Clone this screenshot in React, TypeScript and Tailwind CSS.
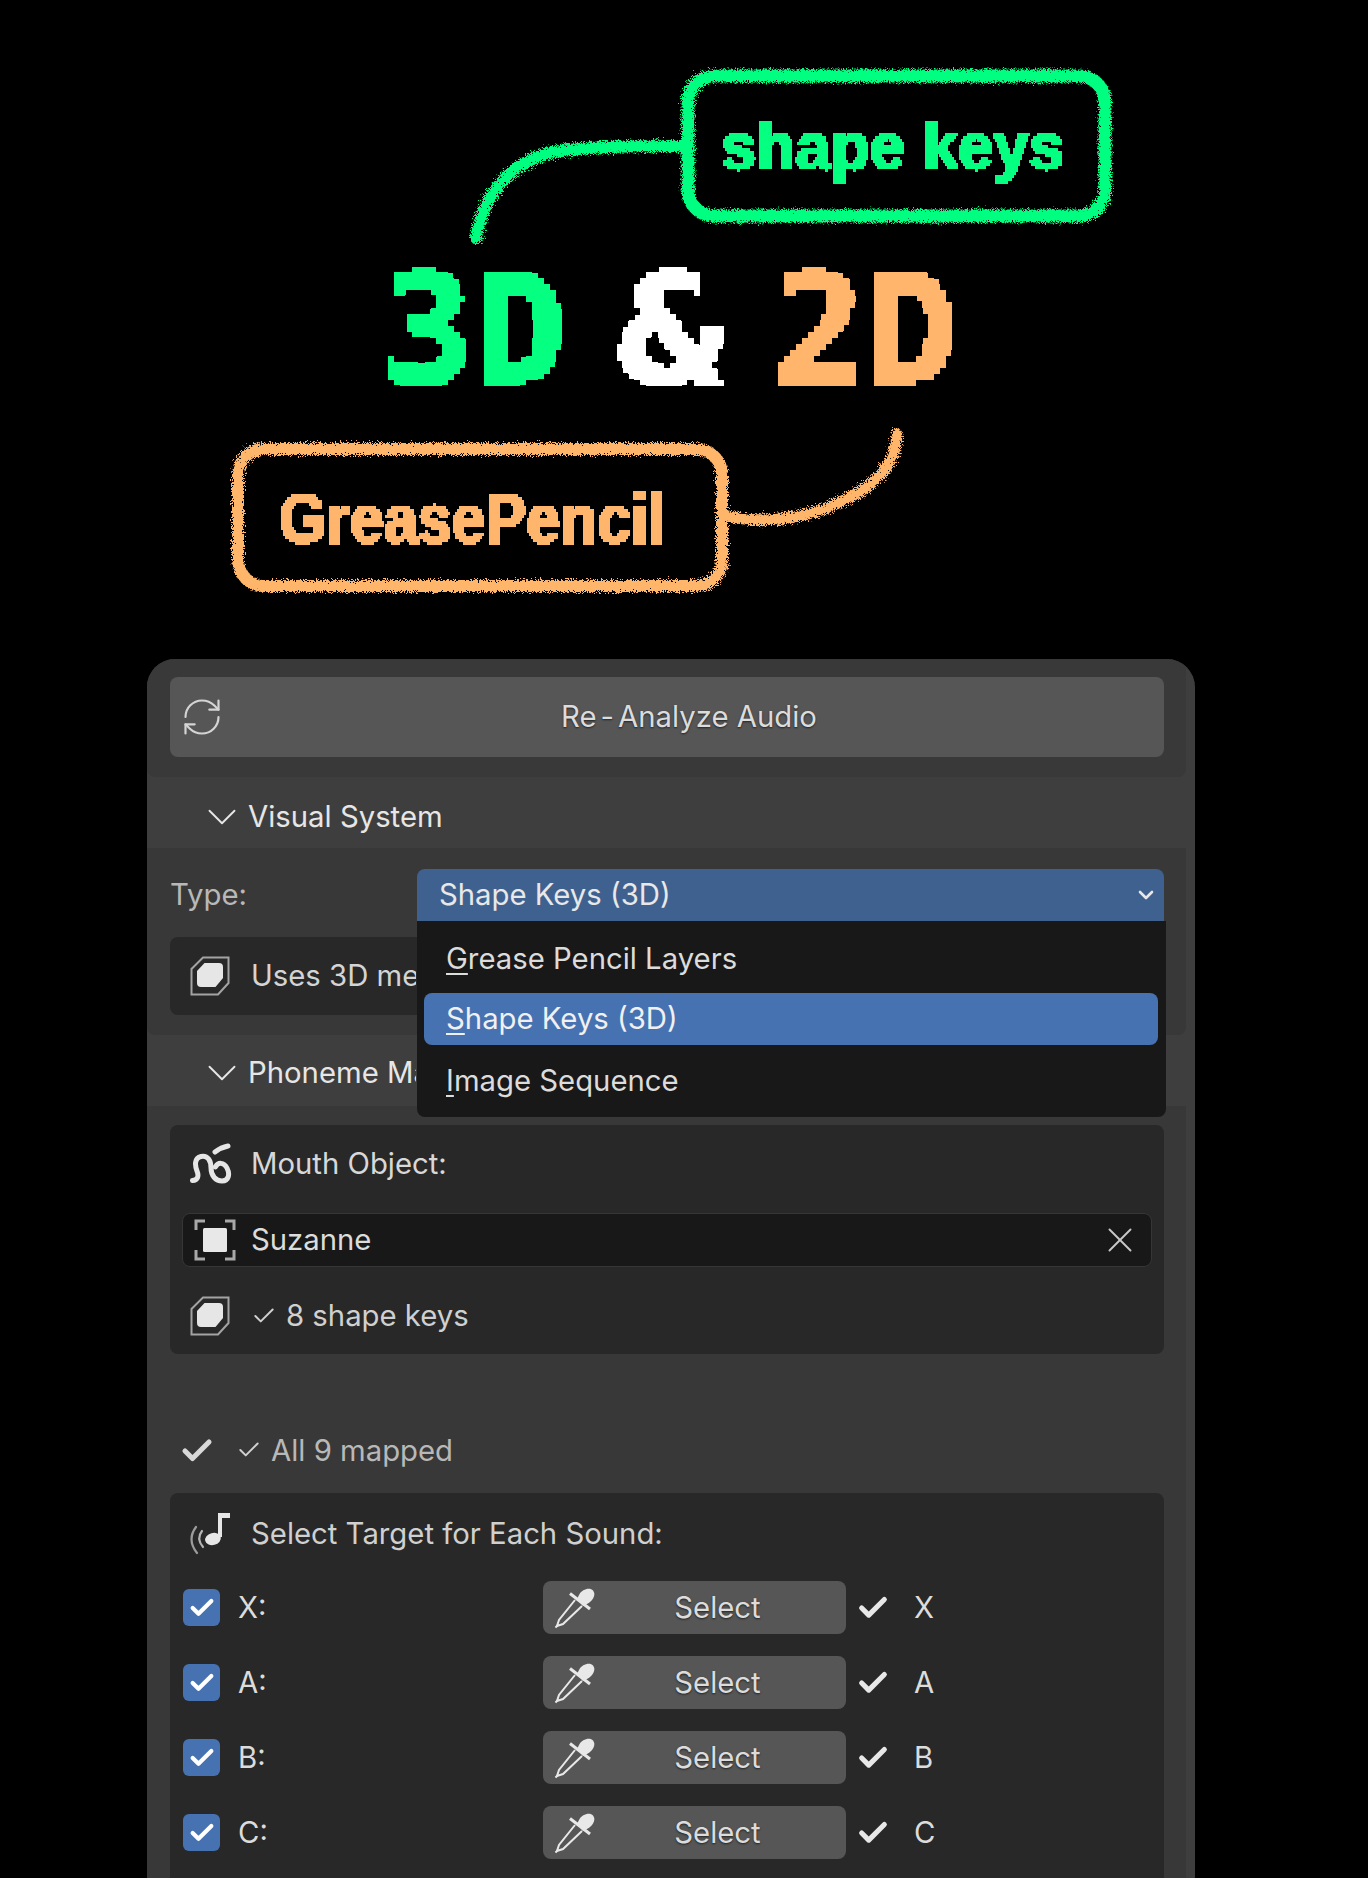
import { Check, ChevronDown, RefreshCw, X } from 'lucide-react';

const UI_FONT = { fontFamily: 'Inter, "Noto Sans", sans-serif' };

const rows = [
  { key: 'X', label: 'X:' },
  { key: 'A', label: 'A:' },
  { key: 'B', label: 'B:' },
  { key: 'C', label: 'C:' },
];

// block-sampling filter: keeps the title as live text but gives it the bitmap look
function Filters() {
  return (
    <svg className="absolute h-0 w-0">
      <defs>
        <filter id="pixel6" x="0" y="0" width="100%" height="100%" colorInterpolationFilters="sRGB">
          <feFlood x="2" y="2" width="2" height="2" floodColor="#000" />
          <feComposite width="6" height="6" />
          <feTile result="grid" />
          <feComponentTransfer in="SourceGraphic" result="hard">
            <feFuncA type="discrete" tableValues="0 1" />
          </feComponentTransfer>
          <feComposite in="hard" in2="grid" operator="in" />
          <feMorphology operator="dilate" radius="2" />
        </filter>
        <filter id="pixel3" x="0" y="0" width="100%" height="100%" colorInterpolationFilters="sRGB">
          <feFlood x="1" y="1" width="1" height="1" floodColor="#000" />
          <feComposite width="3" height="3" />
          <feTile result="grid" />
          <feComponentTransfer in="SourceGraphic" result="hard">
            <feFuncA type="discrete" tableValues="0 1" />
          </feComponentTransfer>
          <feComposite in="hard" in2="grid" operator="in" />
          <feMorphology operator="dilate" radius="1" />
        </filter>
        <filter id="chalk" x="-5%" y="-5%" width="110%" height="110%">
          <feTurbulence type="fractalNoise" baseFrequency="1.4" numOctaves="3" seed="4" />
          <feDisplacementMap in="SourceGraphic" scale="10" />
        </filter>
      </defs>
    </svg>
  );
}

function Callouts() {
  return (
    <svg className="absolute inset-0" width="1368" height="659" viewBox="0 0 1368 659" fill="none" strokeLinecap="round">
      <g filter="url(#chalk)" stroke="#05ff80" strokeWidth="13">
        <rect x="688" y="76" width="417" height="140" rx="26" />
        <path d="M684 146C640 146 590 146 554 152C515 160 484 190 476 238" strokeWidth="12" />
      </g>
      <g filter="url(#chalk)" stroke="#ffb56b" strokeWidth="12">
        <rect x="238" y="449" width="484" height="137" rx="26" />
        <path d="M728 517C760 522 800 522 840 502C880 484 896 462 897 434" strokeWidth="11" />
      </g>
    </svg>
  );
}

function MeshIcon() {
  return (
    <svg width="40" height="40" viewBox="0 0 40 40" fill="none">
      <path d="M13 1.500H38.500V27L28 38.500H1.500V13Z" stroke="#a3a3a3" strokeWidth="2" />
      <path d="M14.500 7H29Q33 7 33 11V22L25.500 31H11Q7 31 7 27V15Z" fill="#e6e6e6" />
    </svg>
  );
}

function CurveIcon() {
  return (
    <svg width="42" height="42" viewBox="0 0 42 42" fill="none" stroke="#e6e6e6" strokeLinecap="round" strokeWidth="5">
      <path d="M2.500 37.500C8 37 9 33 7 28C5 23 4 15 11 13.500C18 12 21 18 21 25C21 33 26 38 32 38C39 38 40 31 37 25C34 19 28 19 25.500 24" />
      <path d="M25 9C29 6 33 4 38 3" />
    </svg>
  );
}

function ObjectIcon() {
  return (
    <svg width="42" height="42" viewBox="0 0 42 42" fill="none">
      <path d="M11 2H2V11M31 2H40V11M11 40H2V31M31 40H40V31" stroke="#a8a8a8" strokeWidth="3" />
      <rect x="9" y="9" width="24" height="24" rx="1.500" fill="#e8e8e8" />
    </svg>
  );
}

function SoundIcon() {
  return (
    <svg width="42" height="42" viewBox="0 0 42 42" fill="none">
      <path d="M7 40C0 31 0 22 6 14" stroke="#9c9c9c" strokeWidth="2.200" strokeLinecap="round" />
      <path d="M13 34C8 28 8 23 12 18" stroke="#b4b4b4" strokeWidth="2.200" strokeLinecap="round" />
      <path d="M28 0H40V5H32V24H28Z" fill="#e6e6e6" />
      <ellipse cx="23" cy="26" rx="8" ry="6" fill="#e6e6e6" transform="rotate(-15 23 26)" />
    </svg>
  );
}

function DropperIcon() {
  return (
    <svg width="42" height="42" viewBox="0 0 42 42" fill="none">
      <path d="M25 8C28 2 36 0 39 3.500C42 7 40 13 33 17L29 19L23 12Z" fill="#e8e8e8" />
      <path d="M16 6.500L36 22" stroke="#e8e8e8" strokeWidth="3" />
      <path d="M21 13L5 33L3 39L9 37L28 19" stroke="#e8e8e8" strokeWidth="2" />
      <path d="M1.500 40.500L4 38" stroke="#e8e8e8" strokeWidth="2" />
    </svg>
  );
}

function ThinCheck() {
  return <Check size={26} strokeWidth={1.8} className="text-[#d0d0d0]" />;
}

function Underlined({ first, rest }: { first: string; rest: string }) {
  return (
    <span>
      <span className="underline decoration-2 underline-offset-4">{first}</span>
      {rest}
    </span>
  );
}

function TypeSelect() {
  return (
    <div className="relative h-[52px] w-[747px]">
      <div className="flex h-full items-center justify-between rounded-t-lg bg-[#3f618f] pr-[6px] pl-[22px] text-[#e8e8e8]">
        <span>Shape Keys (3D)</span>
        <ChevronDown size={24} strokeWidth={2.6} />
      </div>
      <div className="absolute top-full left-0 z-10 flex h-[196px] w-[749px] flex-col rounded-b-lg bg-[#181818] pt-[4px] text-[#dcdcdc]">
        <div className="flex h-[68px] items-center pl-[29px]">
          <Underlined first="G" rest="rease Pencil Layers" />
        </div>
        <div className="mx-[7px] flex h-[52px] w-[734px] items-center rounded-lg bg-[#4672b2] pl-[22px] text-[#f0f0f0]">
          <Underlined first="S" rest="hape Keys (3D)" />
        </div>
        <div className="flex h-[72px] items-center pl-[29px]">
          <Underlined first="I" rest="mage Sequence" />
        </div>
      </div>
    </div>
  );
}

function SoundRow({ item }: { item: { key: string; label: string } }) {
  return (
    <div className="flex h-[53px] items-center">
      <div className="flex h-[37px] w-[37px] items-center justify-center rounded-md bg-[#4672b2]">
        <Check size={28} strokeWidth={3.6} className="text-white" />
      </div>
      <span className="ml-[18px] w-[305px] text-[#dcdcdc]">{item.label}</span>
      <div className="relative flex h-full w-[303px] items-center justify-center rounded-lg bg-[#565656] pl-[46px] text-[#dcdcdc] [text-shadow:0_1px_2px_#0009]">
        <div className="absolute top-[6px] left-[11px]">
          <DropperIcon />
        </div>
        Select
      </div>
      <Check size={34} strokeWidth={3.6} className="ml-[10px] text-[#e8e8e8]" />
      <span className="ml-[24px] text-[#dcdcdc]">{item.key}</span>
    </div>
  );
}

export default function App() {
  return (
    <div className="relative h-[1878px] w-[1368px] overflow-hidden bg-black text-[29.3px] leading-none" style={UI_FONT}>
      <Filters />

      {/* callout diagram */}
      <div className="relative h-[659px]">
        <Callouts />
        <span
          className="absolute top-[106px] left-[721px] origin-left scale-x-[0.95] text-[67px] leading-[80px] font-bold text-[#05ff80] [-webkit-text-stroke:2px_#05ff80] [filter:url(#pixel3)]"
          style={{ fontFamily: '"Liberation Sans", sans-serif' }}
        >
          shape keys
        </span>
        <div
          className="absolute top-[236px] left-[382px] flex text-[152px] leading-[190px] font-bold tracking-[1px] [-webkit-text-stroke:3px_currentColor] [filter:url(#pixel6)]"
          style={{ fontFamily: '"DejaVu Sans Mono", monospace' }}
        >
          <span className="text-[#05ff80]">3D</span>
          <span className="ml-[50px] inline-block origin-left scale-x-[1.15] text-white">&amp;</span>
          <span className="ml-[64px] text-[#ffb56b]">2D</span>
        </div>
        <span
          className="absolute top-[479px] left-[279px] origin-left scale-x-[0.87] text-[70px] leading-[80px] font-bold text-[#ffb56b] [-webkit-text-stroke:2px_#ffb56b] [filter:url(#pixel3)]"
          style={{ fontFamily: '"Liberation Sans", sans-serif' }}
        >
          GreasePencil
        </span>
      </div>

      {/* addon panel */}
      <div className="ml-[147px] w-[1048px] overflow-hidden rounded-t-[28px] bg-[#3e3e3e]">
        <div className="w-[1039px]">
          <div className="rounded-b-lg bg-[#393939] pt-[18px] pr-[22px] pb-[20px] pl-[23px]">
            <div className="relative flex h-[80px] items-center justify-center rounded-lg bg-[#565656] text-[#dcdcdc] [text-shadow:0_1px_2px_#0009]">
              <RefreshCw size={44} strokeWidth={1.2} className="absolute left-[10px] text-[#d4d4d4]" />
              <span className="ml-[44px]">
                Re<span className="mx-[4px]">-</span>Analyze Audio
              </span>
            </div>
          </div>

          <div className="flex h-[71px] items-center gap-[1px] pt-[8px] pl-[50px] text-[#e6e6e6]">
            <ChevronDown size={50} strokeWidth={0.9} />
            <span>Visual System</span>
          </div>

          <div className="rounded-b-lg bg-[#383838] pt-[21px] pr-[22px] pb-[20px] pl-[23px]">
            <div className="flex items-center justify-between">
              <span className="text-[#b8b8b8]">Type:</span>
              <TypeSelect />
            </div>
            <div className="mt-[16px] flex h-[78px] items-center gap-[21px] overflow-hidden rounded-lg bg-[#282828] pl-[20px] text-[#d4d4d4]">
              <MeshIcon />
              {/* the open menu covers the rest of this line */}
              <span className="w-[165px] overflow-hidden whitespace-nowrap">Uses 3D mesh with shape keys</span>
            </div>
          </div>

          <div className="flex h-[71px] items-center gap-[1px] pt-[4px] pl-[50px] text-[#e6e6e6]">
            <ChevronDown size={50} strokeWidth={0.9} />
            <span className="w-[168px] overflow-hidden whitespace-nowrap">Phoneme Mapping</span>
          </div>

          <div className="bg-[#383838] pt-[19px] pr-[22px] pl-[23px]">
            <div className="h-[229px] rounded-lg bg-[#282828] px-[12px]">
              <div className="flex h-[88px] items-center gap-[19px] pb-[10px] pl-[8px] text-[#d8d8d8]">
                <CurveIcon />
                <span>Mouth Object:</span>
              </div>
              <div className="flex h-[54px] items-center rounded-lg border border-[#363636] bg-[#181818] pr-[10px] pl-[11px] text-[#dcdcdc]">
                <ObjectIcon />
                <span className="ml-[15px]">Suzanne</span>
                <X size={42} strokeWidth={1.1} className="ml-auto text-[#c8c8c8]" />
              </div>
              <div className="flex h-[87px] items-center pt-[11px] pl-[8px] text-[#d0d0d0]">
                <MeshIcon />
                <span className="ml-[21px] flex items-center gap-[9px]">
                  <ThinCheck />8 shape keys
                </span>
              </div>
            </div>

            <div className="flex h-[139px] items-center pt-[54px] pl-[9px] text-[#b8b8b8]">
              <Check size={36} strokeWidth={3.4} className="text-[#d8d8d8]" />
              <span className="ml-[21px] flex items-center gap-[9px]">
                <ThinCheck />All 9 mapped
              </span>
            </div>

            <div className="h-[400px] rounded-lg bg-[#282828] px-[12px]">
              <div className="flex h-[88px] items-center gap-[19px] pb-[7px] pl-[8px] text-[#d0d0d0]">
                <SoundIcon />
                <span>Select Target for Each Sound:</span>
              </div>
              <div className="flex flex-col gap-[22px] pl-[1px]">
                {rows.map((item) => (
                  <SoundRow key={item.key} item={item} />
                ))}
              </div>
            </div>
          </div>
        </div>
      </div>
    </div>
  );
}
